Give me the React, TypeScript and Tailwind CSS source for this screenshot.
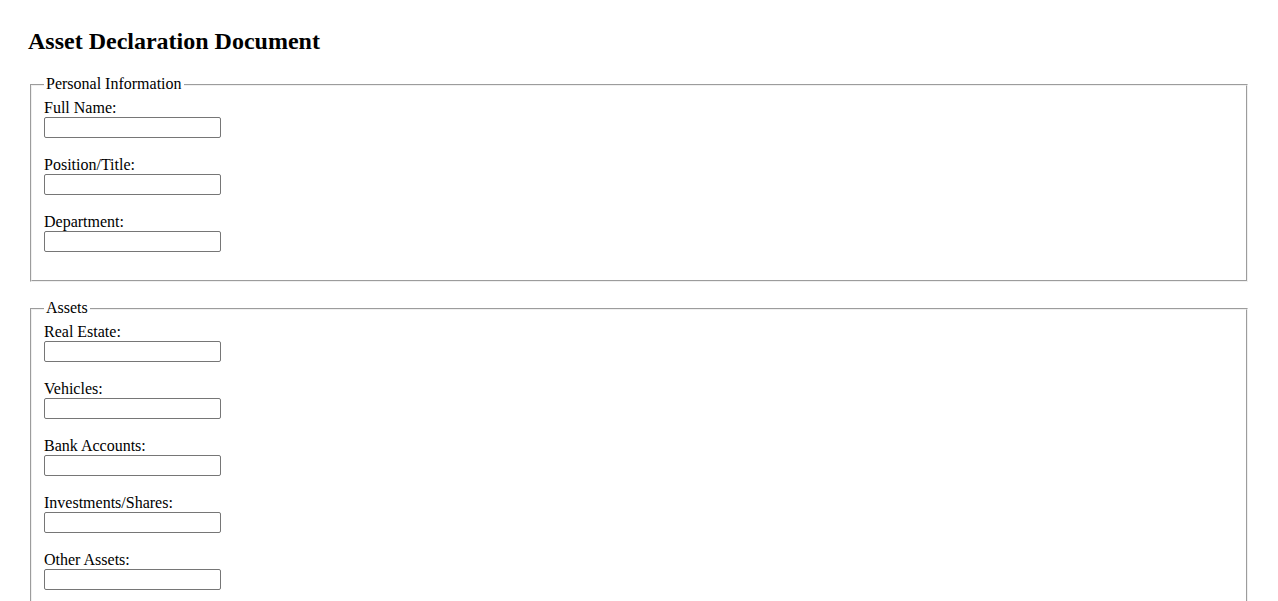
const personal = ["Full Name:", "Position/Title:", "Department:"];
const assets = ["Real Estate:", "Vehicles:", "Bank Accounts:", "Investments/Shares:", "Other Assets:"];

function Field({ label }: { label: string }) {
  return (
    <div className="mb-[18.6px]">
      <label className="block leading-[17.4px]">{label}</label>
      <input
        type="text"
        className="block w-[177px] h-[21px] border border-[#767676] rounded-[2px] px-[2px] py-[1px] text-[13.33px] font-['Liberation_Sans',Arial,sans-serif] bg-white"
      />
    </div>
  );
}

function Section({ title, fields }: { title: string; fields: string[] }) {
  return (
    <fieldset className="mx-[2px] mb-[17px] border-2 border-[#f0f0f0] [border-style:groove] px-3 pt-[5.6px] pb-[10px]">
      <legend className="px-[2px] leading-[18.4px]">{title}</legend>
      {fields.map((f) => (
        <Field key={f} label={f} />
      ))}
    </fieldset>
  );
}

export default function App() {
  return (
    <div className="bg-white text-black font-['Liberation_Serif','Times_New_Roman',serif] text-[16px] px-[28px] pt-[8px] pb-[8px] min-h-screen">
      <h2 className="text-[24px] font-bold leading-[27.6px] mt-[19.92px] mb-[19.92px]">Asset Declaration Document</h2>
      <form>
        <Section title="Personal Information" fields={personal} />
        <Section title="Assets" fields={assets} />
      </form>
    </div>
  );
}
